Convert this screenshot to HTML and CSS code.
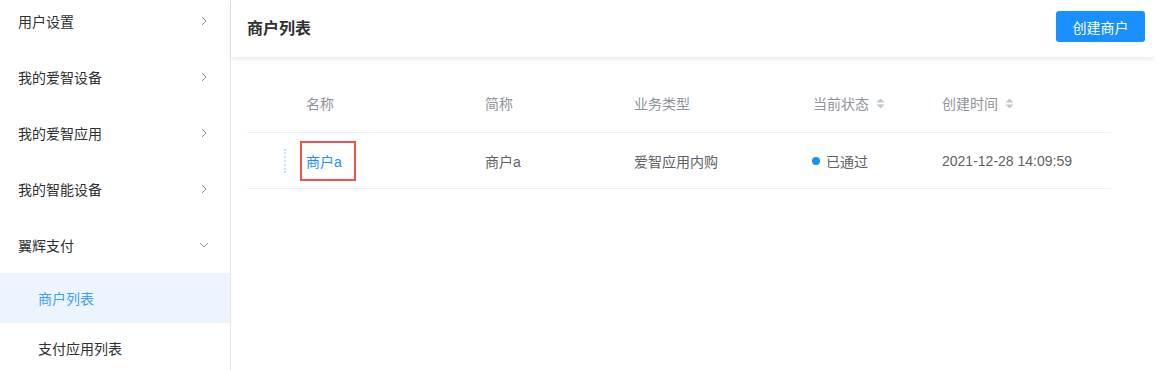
FILE: index.html
```html
<!DOCTYPE html>
<html lang="zh-CN">
<head>
<meta charset="utf-8">
<title>商户列表</title>
<link rel="stylesheet" href="styles.css">
</head>
<body>
<div class="app">
  <aside class="sidebar">
    <ul class="menu">
      <li class="menu-title"><span>用户设置</span><svg class="chev" width="6" height="10" viewBox="0 0 6 10"><path d="M1 1l4 4-4 4" fill="none" stroke="#909399" stroke-width="1"/></svg></li>
      <li class="menu-title"><span>我的爱智设备</span><svg class="chev" width="6" height="10" viewBox="0 0 6 10"><path d="M1 1l4 4-4 4" fill="none" stroke="#909399" stroke-width="1"/></svg></li>
      <li class="menu-title"><span>我的爱智应用</span><svg class="chev" width="6" height="10" viewBox="0 0 6 10"><path d="M1 1l4 4-4 4" fill="none" stroke="#909399" stroke-width="1"/></svg></li>
      <li class="menu-title"><span>我的智能设备</span><svg class="chev" width="6" height="10" viewBox="0 0 6 10"><path d="M1 1l4 4-4 4" fill="none" stroke="#909399" stroke-width="1"/></svg></li>
      <li class="menu-title"><span>翼辉支付</span><svg class="chev-down" width="10" height="6" viewBox="0 0 10 6"><path d="M1 1l4 4 4-4" fill="none" stroke="#909399" stroke-width="1"/></svg></li>
      <li class="menu-sub active">商户列表</li>
      <li class="menu-sub">支付应用列表</li>
    </ul>
  </aside>
  <main class="main">
    <header class="topbar">
      <h1 class="title">商户列表</h1>
      <button class="btn-primary">创建商户</button>
    </header>
    <section class="table">
      <div class="row head">
        <div class="cell c0"></div>
        <div class="cell c1 name-head">名称</div>
        <div class="cell">简称</div>
        <div class="cell">业务类型</div>
        <div class="cell">当前状态<svg class="sort" width="9" height="11" viewBox="0 0 9 11"><path d="M4.5 0.5L8.5 4.5H0.5Z" fill="#c0c4cc"/><path d="M4.5 10.5L8.5 6.5H0.5Z" fill="#c0c4cc"/></svg></div>
        <div class="cell">创建时间<svg class="sort" width="9" height="11" viewBox="0 0 9 11"><path d="M4.5 0.5L8.5 4.5H0.5Z" fill="#c0c4cc"/><path d="M4.5 10.5L8.5 6.5H0.5Z" fill="#c0c4cc"/></svg></div>
      </div>
      <div class="row body">
        <div class="cell c0"><span class="drag-line"></span></div>
        <div class="cell c1"><span class="mark"><a class="link">商户a</a></span></div>
        <div class="cell">商户a</div>
        <div class="cell">爱智应用内购</div>
        <div class="cell"><span class="dot"></span>已通过</div>
        <div class="cell num">2021-12-28 14:09:59</div>
      </div>
    </section>
  </main>
</div>
</body>
</html>
```

FILE: styles.css
```css
* { box-sizing: border-box; }
html, body { margin: 0; padding: 0; background: #fff; }
body {
  font-family: "Liberation Sans", "Noto Sans CJK SC", sans-serif;
  font-size: 14px;
  color: #303133;
  overflow: hidden;
}
.app { display: flex; height: 370px; }

.sidebar {
  width: 231px;
  flex: none;
  border-right: 1px solid #e6e6e6;
  overflow: hidden;
}
.menu { list-style: none; margin: -7px 0 0; padding: 0; }
.menu-title {
  height: 56px;
  display: flex;
  align-items: center;
  justify-content: space-between;
  padding: 0 23px 0 18px;
  color: #303133;
}
.menu-title .chev-down { margin-right: -2px; }
.menu-sub {
  height: 50px;
  display: flex;
  align-items: center;
  padding-left: 38px;
  color: #303133;
}
.menu-sub.active { background: #ecf5ff; color: #409eff; }

.main { flex: 1; min-width: 0; }
.topbar {
  height: 57px;
  padding: 0 10px 4px 16px;
  display: flex;
  align-items: center;
  justify-content: space-between;
  box-shadow: 0 2px 6px rgba(0, 0, 0, 0.09);
  position: relative;
}
.title { margin: 0; font-size: 16px; font-weight: 600; color: #303133; }
.btn-primary {
  height: 31px;
  padding: 0 16.5px;
  border: none;
  border-radius: 3px;
  background: #1890ff;
  color: #fff;
  font-family: inherit;
  font-size: 14px;
}

.table { margin: 19px 44px 0 16px; }
.row {
  display: grid;
  grid-template-columns: 53px 185px 149px 179px 129px 1fr;
  border-bottom: 1px solid #ebeef5;
}
.row.head { height: 57px; padding-bottom: 2px; color: #909399; }
.row.body { height: 56px; color: #606266; }
.cell { display: flex; align-items: center; white-space: nowrap; }
.name-head { padding-left: 6px; }
.sort { margin-left: 7px; }
.drag-line {
  display: block;
  margin-left: 37px;
  width: 0;
  height: 24px;
  border-left: 2px dotted #c6e2ff;
}
.mark {
  display: inline-flex;
  align-items: center;
  height: 40px;
  padding: 0 12px 0 4px;
  border: 2px solid #f05252;
}
.link { color: #1890ff; text-decoration: none; }
.dot {
  width: 8px;
  height: 8px;
  border-radius: 50%;
  background: #1890ff;
  margin: 0 6px 0 -1px;
}
```
